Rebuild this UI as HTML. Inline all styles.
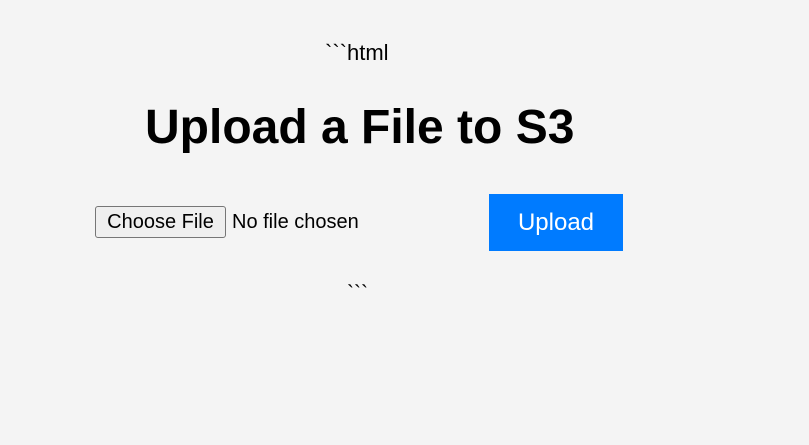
<!DOCTYPE html>
<html><head><style>
html,body{margin:0;padding:0;background:#f4f4f4;width:809px;height:445px;overflow:hidden;font-family:"Liberation Sans",Arial,sans-serif;color:#000}
.a{position:absolute;white-space:nowrap}
</style></head><body>
<div class="a" style="left:325px;top:41px;font-size:22px;line-height:24px">&#96;&#96;&#96;html</div>
<div class="a" style="left:145px;top:99px;font-size:48px;font-weight:bold;line-height:58px">Upload a File to S3</div>
<div class="a" style="left:95px;top:206px;width:129px;height:30px;border:1px solid #767676;border-radius:3px;background:#efefef;font-size:20px;line-height:30px;text-align:center">Choose File</div>
<div class="a" style="left:232px;top:209px;font-size:20px;line-height:26px">No file chosen</div>
<div class="a" style="left:489px;top:194px;width:134px;height:57px;background:#007bff;color:#fff;font-size:24px;line-height:57px;text-align:center">Upload</div>
<div class="a" style="left:347px;top:282px;font-size:21px;line-height:24px">&#96;&#96;&#96;</div>
</body></html>
